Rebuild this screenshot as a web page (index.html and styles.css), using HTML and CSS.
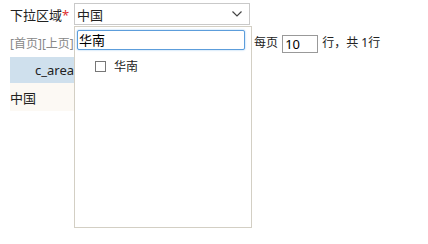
FILE: index.html
```html
<!DOCTYPE html>
<html lang="zh-CN">
  <head>
    <meta charset="UTF-8" />
    <title>下拉区域</title>
    <link rel="stylesheet" href="styles.css">
  </head>
  <body>
    <div class="form-row">
      <label class="field-label">下拉区域<span class="req">*</span></label>
      <div class="combo">
        <div class="combo-value">
          <span>中国</span>
          <svg class="chevron" width="12" height="8" viewBox="0 0 12 8">
            <path d="M1.5 1.5 L6 6 L10.5 1.5" fill="none" stroke="#444" stroke-width="1.2" />
          </svg>
        </div>
        <div class="combo-panel">
          <input class="combo-search" type="text" value="华南" />
          <div class="combo-item">
            <span class="check"></span>
            <span>华南</span>
          </div>
        </div>
      </div>
    </div>

    <div class="pager">
      <span class="pager-links">[首页][上页][下页][尾页]</span>
      <span class="pager-size">
        每页 <input class="page-input" type="text" value="10" /> 行，共 1行
      </span>
    </div>

    <table class="grid">
      <thead>
        <tr><th>c_area</th></tr>
      </thead>
      <tbody>
        <tr><td>中国</td></tr>
      </tbody>
    </table>
  </body>
</html>
```

FILE: styles.css
```css
html,
body {
  min-height: 100vh;
}

body {
  margin: 0;
  font-family: "Noto Sans", "Noto Sans CJK SC", sans-serif;
  font-size: 13px;
  color: #222;
  background: #fff;
}

.form-row {
  display: flex;
  align-items: center;
  padding: 3px 10px 0;
  height: 22px;
}

.field-label {
  width: 64px;
}

.req {
  color: #e0312f;
}

.combo {
  position: relative;
}

.combo-value {
  width: 166px;
  height: 20px;
  border: 1px solid #c9c9c9;
  display: flex;
  align-items: center;
  justify-content: space-between;
  padding: 0 6px 0 2px;
}

.chevron {
  display: block;
}

.combo-panel {
  position: absolute;
  top: 23px;
  left: 0;
  width: 176px;
  height: 200px;
  border: 1px solid #d3cfc4;
  background: #fff;
  z-index: 5;
}

.combo-search {
  display: block;
  margin: 3px 0 0 2px;
  width: 164px;
  height: 16px;
  padding: 1px 1px;
  border: 1px solid #5c9ddb;
  border-radius: 2px;
  box-shadow: 0 0 2px #8dc0ef;
  font: inherit;
  font-size: 13px;
  line-height: 16px;
  outline: none;
}

.combo-item {
  display: flex;
  align-items: center;
  gap: 8px;
  padding: 7px 0 0 20px;
  font-size: 12px;
}

.check {
  width: 9px;
  height: 9px;
  border: 1px solid #777;
}

.pager {
  display: flex;
  align-items: center;
  padding: 7px 10px 0;
  height: 22px;
  font-size: 12px;
}

.pager-links {
  color: #888;
  width: 244px;
  white-space: nowrap;
  overflow: hidden;
}

.pager-size {
  color: #222;
  font-size: 12px;
}

.page-input {
  width: 30px;
  height: 16px;
  padding: 0 2px;
  border: 1px solid #999;
  font: inherit;
  font-size: 13px;
  margin: 0 1px;
  vertical-align: middle;
}

.grid {
  margin: 3px 0 0 10px;
  border-collapse: collapse;
  width: 200px;
}

.grid th {
  background: #cfe0ed;
  font-weight: normal;
  height: 26px;
  padding: 0 0 0 25px;
  text-align: left;
}

.grid td {
  background: #fcf9f4;
  height: 28px;
  padding: 0;
}
```
